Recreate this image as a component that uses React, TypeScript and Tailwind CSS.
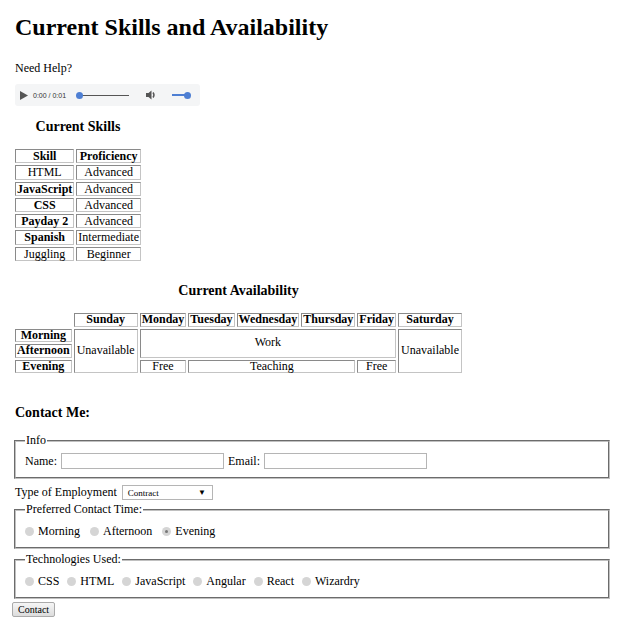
import type { ReactNode } from "react";

const skills: [string, string, boolean][] = [
  ["HTML", "Advanced", false],
  ["JavaScript", "Advanced", true],
  ["CSS", "Advanced", true],
  ["Payday 2", "Advanced", true],
  ["Spanish", "Intermediate", true],
  ["Juggling", "Beginner", false],
];

const days = ["Sunday", "Monday", "Tuesday", "Wednesday", "Thursday", "Friday", "Saturday"];

const cell =
  "border border-t-[#8a8a8a] border-l-[#8a8a8a] border-r-[#c4c4c4] border-b-[#c4c4c4] px-[1px] text-center align-middle";

function AudioBar() {
  return (
    <div className="ml-[3px] mt-[8px] flex h-[22px] w-[185px] items-center rounded-[3px] bg-[#f4f5f6] pl-[5px] [font-family:Liberation_Sans,Arial,sans-serif]">
      <svg width="8" height="9" viewBox="0 0 8 9" className="shrink-0">
        <path d="M0 0 L8 4.5 L0 9 Z" fill="#555" />
      </svg>
      <span className="ml-[5px] text-[7px] text-[#333]">0:00 / 0:01</span>
      <div className="relative ml-[13px] h-[1px] w-[50px] bg-[#555]">
        <span className="absolute -left-[3px] -top-[3px] size-[7px] rounded-full bg-[#4e7fd3]" />
      </div>
      <svg width="12" height="12" viewBox="0 0 12 12" className="ml-[16px] shrink-0">
        <path d="M1 4 H3.5 L6.5 1.5 V10.5 L3.5 8 H1 Z" fill="#555" />
        <path d="M8 3.5 Q10 6 8 8.5" stroke="#555" strokeWidth="1.4" fill="none" />
      </svg>
      <div className="relative ml-[15px] h-[2px] w-[16px] bg-[#4e7fd3]">
        <span className="absolute -right-[3px] -top-[2.5px] size-[7px] rounded-full bg-[#4e7fd3]" />
      </div>
    </div>
  );
}

function Dot({ checked = false }: { checked?: boolean }) {
  return (
    <span className="inline-flex size-[9px] shrink-0 items-center justify-center rounded-full bg-[#d5d5d5]">
      {checked && <span className="size-[3px] rounded-full bg-[#777]" />}
    </span>
  );
}

function Choice({ label, checked, wide }: { label: string; checked?: boolean; wide?: boolean }) {
  return (
    <label className={`inline-flex items-center gap-[4px] ${wide ? "mr-[10px]" : "mr-[8px]"}`}>
      <Dot checked={checked} />
      {label}
    </label>
  );
}

function Group({ title, children }: { title: string; children: ReactNode }) {
  return (
    <fieldset className="mx-[2px] border-2 border-[#c0c0c0] px-[9px] pb-[8px] pt-[4px] [border-style:groove]">
      <legend className="px-[1px]">{title}</legend>
      {children}
    </fieldset>
  );
}

export default function App() {
  return (
    <div className="min-h-screen bg-white px-[12px] pt-[14px] text-[12px] leading-[normal] text-black [font-family:Liberation_Serif,Times_New_Roman,serif]">
      <h1 className="ml-[3px] text-[24px] font-bold">Current Skills and Availability</h1>
      <p className="ml-[3px] mt-[20px]">Need Help?</p>
      <AudioBar />

      <table className="ml-[1px] mt-[13px] border-separate border-spacing-[2px] leading-[12.3px]">
        <caption className="mb-[12px] text-[14px] font-bold leading-[normal]">Current Skills</caption>
        <thead>
          <tr>
            <th className={cell}>Skill</th>
            <th className={cell}>Proficiency</th>
          </tr>
        </thead>
        <tbody>
          {skills.map(([s, p, bold]) => (
            <tr key={s}>
              <td className={`${cell} ${bold ? "font-bold" : "border-[#6a6a6a]"}`}>{s}</td>
              <td className={cell}>{p}</td>
            </tr>
          ))}
        </tbody>
      </table>

      <table className="ml-[1px] mt-[20px] border-separate border-spacing-[2px] leading-[11.6px]">
        <caption className="mb-[12px] text-[14px] font-bold leading-[normal]">Current Availability</caption>
        <thead>
          <tr>
            <th />
            {days.map((d) => (
              <th key={d} className={cell}>
                {d}
              </th>
            ))}
          </tr>
        </thead>
        <tbody>
          <tr>
            <th className={cell}>Morning</th>
            <td className={`${cell} px-[2px]`} rowSpan={3}>
              Unavailable
            </td>
            <td className={cell} colSpan={5} rowSpan={2}>
              Work
            </td>
            <td className={`${cell} px-[2px]`} rowSpan={3}>
              Unavailable
            </td>
          </tr>
          <tr>
            <th className={cell}>Afternoon</th>
          </tr>
          <tr>
            <th className={cell}>Evening</th>
            <td className={cell}>Free</td>
            <td className={cell} colSpan={3}>
              Teaching
            </td>
            <td className={cell}>Free</td>
          </tr>
        </tbody>
      </table>

      <h3 className="ml-[3px] mt-[30px] text-[14px] font-bold">Contact Me:</h3>

      <form className="mt-[12px]" onSubmit={(e) => e.preventDefault()}>
        <Group title="Info">
          <div className="flex items-center pt-[1px]">
            <label htmlFor="name">Name:</label>
            <input
              id="name"
              type="text"
              className="ml-[4px] h-[16px] w-[163px] border border-[#b5b5b5] bg-white"
            />
            <label htmlFor="email" className="ml-[4px]">
              Email:
            </label>
            <input
              id="email"
              type="email"
              className="ml-[4px] h-[16px] w-[163px] border border-[#b5b5b5] bg-white"
            />
          </div>
        </Group>

        <div className="mb-[2px] ml-[3px] mt-[6px] flex items-center">
          <span>Type of Employment</span>
          <div className="ml-[5px] flex h-[15px] w-[91px] items-center justify-between border border-[#b5b5b5] bg-white pl-[5px] pr-[6px] text-[9px]">
            <span>Contract</span>
            <span className="text-[8px]">▼</span>
          </div>
        </div>

        <Group title="Preferred Contact Time:">
          <div className="flex items-center pt-[3px]">
            <Choice label="Morning" wide />
            <Choice label="Afternoon" wide />
            <Choice label="Evening" checked wide />
          </div>
        </Group>

        <div className="h-[3px]" />

        <Group title="Technologies Used:">
          <div className="flex items-center pt-[3px]">
            <Choice label="CSS" />
            <Choice label="HTML" />
            <Choice label="JavaScript" />
            <Choice label="Angular" />
            <Choice label="React" />
            <Choice label="Wizardry" />
          </div>
        </Group>

        <button
          type="submit"
          className="mt-[3px] h-[15px] rounded-[2px] border border-[#aaa] bg-gradient-to-b from-[#f6f6f6] to-[#dcdcdc] px-[5px] text-[10px] leading-[13px]"
        >
          Contact
        </button>
      </form>
    </div>
  );
}
